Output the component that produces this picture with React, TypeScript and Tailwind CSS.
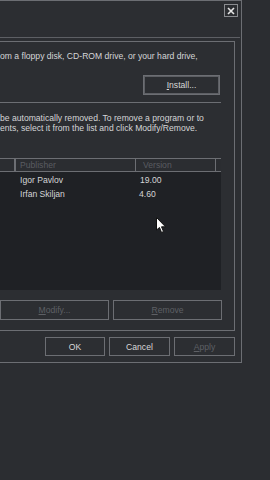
import React from "react";

const line = "border-[#6c6e73]";

function Btn({
  children,
  w,
  h = 19,
  disabled,
  focused,
}: {
  children: React.ReactNode;
  w: number;
  h?: number;
  disabled?: boolean;
  focused?: boolean;
}) {
  return (
    <div
      className={`flex items-center justify-center border ${line} ${
        focused ? "shadow-[inset_0_0_0_1px_#5d5f64]" : ""
      } ${disabled ? "text-[#5e6065]" : "text-[#d8d8d8]"}`}
      style={{ width: w, height: h }}
    >
      {children}
    </div>
  );
}

export default function App() {
  return (
    <div
      className="relative w-[270px] h-[480px] overflow-hidden bg-[#2b2d31] text-[8.6px] leading-[10px] text-[#d4d5d7]"
      style={{ fontFamily: '"Liberation Sans", Arial, sans-serif' }}
    >
      <div className={`w-[242px] h-[363px] border-t border-r border-b ${line} flex flex-col bg-[#2c2e32]`}>
        <div className="h-[36px] flex justify-end items-start pt-[3px] pr-[3px]">
          <div className="w-[14px] h-[13px] border border-[#8a8c90] flex items-center justify-center">
            <svg width="8" height="8" viewBox="0 0 8 8">
              <path d="M1 1 L7 7 M7 1 L1 7" stroke="#e6e6e6" strokeWidth="1.6" />
            </svg>
          </div>
        </div>
        <div className="w-[240px] border-t border-[#5d5f64]" />
        <div className={`mt-[3px] w-[235px] h-[290px] border-t border-r border-b ${line} flex flex-col`}>
          <div className="mt-[9px] whitespace-nowrap">om a floppy disk, CD-ROM drive, or your hard drive,</div>
          <div className="mt-[14px] ml-[143px]">
            <Btn w={77} h={20} focused>
              <span>
                <u>I</u>nstall...
              </span>
            </Btn>
          </div>
          <div className={`mt-[7px] w-[221px] border-t ${line}`} />
          <div className="mt-[10px] whitespace-nowrap">be automatically removed. To remove a program or to</div>
          <div className="whitespace-nowrap">ents, select it from the list and click Modify/Remove.</div>
          <div className="mt-[25px] w-[221px] h-[132px] flex flex-col bg-[#1f2125]">
            <div className={`h-[14px] flex border-t border-b ${line} bg-[#2b2d31] text-[#5a5c61]`}>
              <div className={`w-[15px] border-r ${line}`} />
              <div className={`w-[121px] border-l border-r ${line} pl-[4px] flex items-center`}>Publisher</div>
              <div className={`w-[80px] border-r ${line} pl-[7px] flex items-center`}>Version</div>
              <div className="flex-1" />
            </div>
            <div className="flex h-[14px] items-center mt-[1px]">
              <div className="w-[20px]" />
              <div className="w-[120px]">Igor Pavlov</div>
              <div>19.00</div>
            </div>
            <div className="flex h-[14px] items-center">
              <div className="w-[20px]" />
              <div className="w-[119px]">Irfan Skiljan</div>
              <div>4.60</div>
            </div>
          </div>
          <div className="mt-[10px] flex gap-[4px]">
            <Btn w={109} h={20} disabled>
              <span>
                <u>M</u>odify...
              </span>
            </Btn>
            <Btn w={109} h={20} disabled>
              <span>
                <u>R</u>emove
              </span>
            </Btn>
          </div>
        </div>
        <div className="mt-[6px] ml-[45px] flex gap-[4px]">
          <Btn w={60}>OK</Btn>
          <Btn w={61}>Cancel</Btn>
          <Btn w={61} disabled>
            <span>
              <u>A</u>pply
            </span>
          </Btn>
        </div>
      </div>
      <svg className="absolute left-[156px] top-[217px]" width="11" height="17" viewBox="0 0 11 17">
        <path d="M0.5 0.5 L0.5 13 L3.5 10.5 L5.5 15.5 L7.5 14.5 L5.5 9.8 L9.5 9.8 Z" fill="#ffffff" stroke="#111" strokeWidth="1" />
      </svg>
    </div>
  );
}
